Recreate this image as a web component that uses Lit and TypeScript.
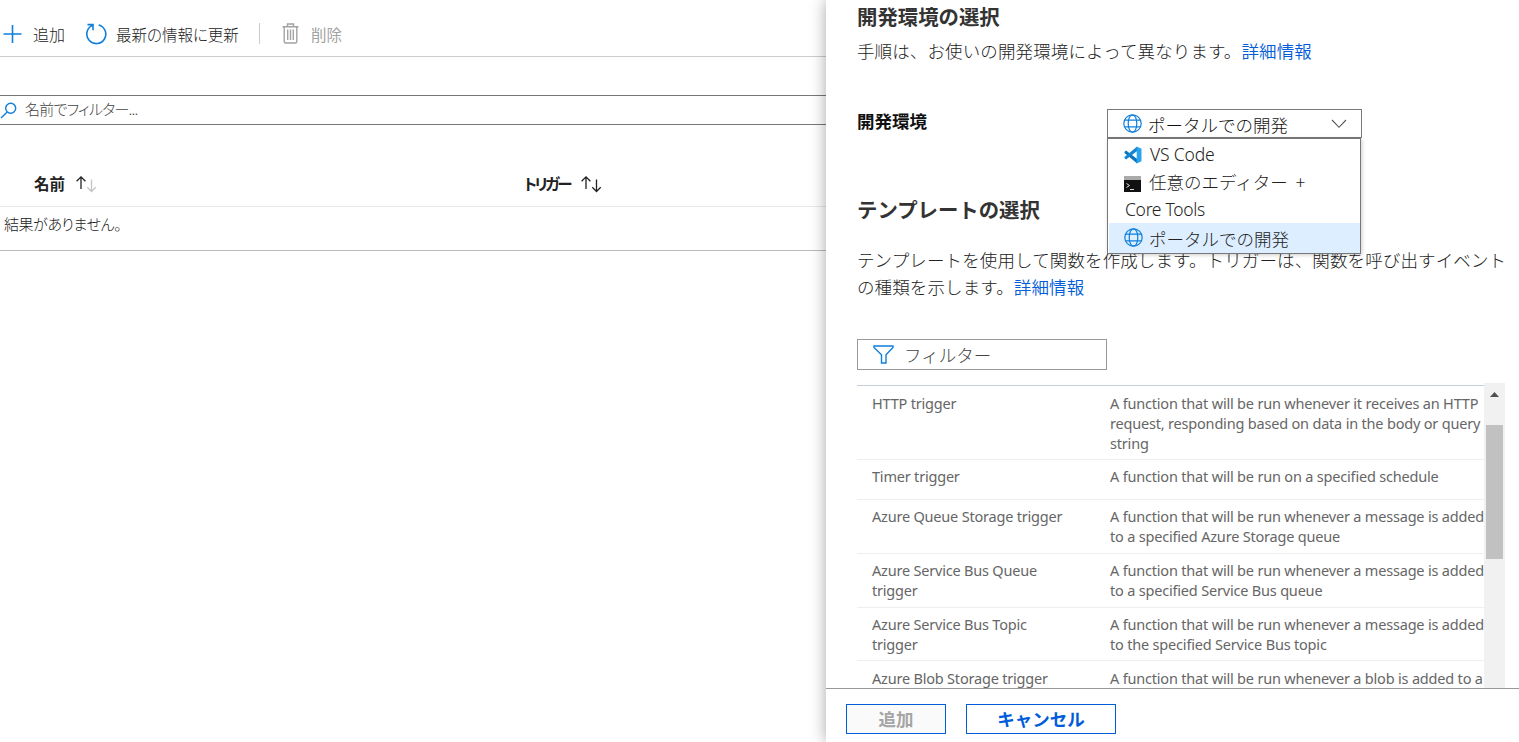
import { LitElement, html, css } from "lit";
import { customElement } from "lit/decorators.js";

const globe = html`<svg class="globe" width="19" height="19" viewBox="0 0 19 19" fill="none" stroke="#0f7fdc" stroke-width="1.2">
  <circle cx="9.5" cy="9.5" r="8.7"/><ellipse cx="9.5" cy="9.5" rx="4.3" ry="8.7"/><path d="M1.7 6.2h15.6M1.7 12.8h15.6"/></svg>`;

const sortIcon = (down: string) => html`<svg class="sort" width="22" height="18" viewBox="0 0 22 18" fill="none" stroke-width="1.3">
  <path stroke="#222" d="M6 14V2M1.6 6.2 6 1.8l4.4 4.4"/><path stroke="${down}" d="M16.5 4.5v12M12.3 12.3l4.2 4.2 4.2-4.2"/></svg>`;

const rows = [
  { h: 74, p: 7, name: ["HTTP trigger"], text: ["A function that will be run whenever it receives an HTTP", "request, responding based on data in the body or query", "string"] },
  { h: 40, p: 6, name: ["Timer trigger"], text: ["A function that will be run on a specified schedule"] },
  { h: 54, p: 6, name: ["Azure Queue Storage trigger"], text: ["A function that will be run whenever a message is added", "to a specified Azure Storage queue"] },
  { h: 54, p: 6, name: ["Azure Service Bus Queue", "trigger"], text: ["A function that will be run whenever a message is added", "to a specified Service Bus queue"] },
  { h: 53, p: 6, name: ["Azure Service Bus Topic", "trigger"], text: ["A function that will be run whenever a message is added", "to the specified Service Bus topic"] },
  { h: 54, p: 7, name: ["Azure Blob Storage trigger"], text: ["A function that will be run whenever a blob is added to a"] },
];

@customElement("app-root")
export class AppRoot extends LitElement {
  static styles = css`
    :host { display: block; height: 742px; overflow: hidden; background: #fff; color: #333; font-family: "Noto Sans", "Noto Sans CJK JP", sans-serif; }
    * { box-sizing: border-box; }
    svg { display: block; flex: none; }
    .page { display: flex; height: 742px; }
    .main { width: 826px; flex: none; font-family: "Noto Sans CJK JP", sans-serif; font-size: 15.5px; white-space: nowrap; font-weight: 300; color: #222; }
    .toolbar { height: 57px; border-bottom: 1px solid #ccc; display: flex; align-items: center; padding: 11px 0 0 3px; }
    .toolbar .t1 { margin: 0 20px 0 11px; width: 32px; font-size: 16px; }
    .toolbar .t2 { margin-left: 9px; width: 124px; font-feature-settings: "palt"; }
    .sep { width: 1px; height: 21px; background: #ccc; margin: 0 22px 0 19px; }
    .t3 { margin-left: 12px; color: #a3a3a3; font-weight: 400; }
    .search { margin-top: 38px; height: 30px; border: solid #777; border-width: 1px 0; display: flex; align-items: center; color: #444; }
    .search span { margin: -3px 0 0 8px; font-feature-settings: "palt"; font-size: 15px; letter-spacing: -.75px; }
    .head { display: flex; height: 82px; border-bottom: 1px solid #e8e8e8; padding-top: 36px; font-weight: 600; color: #222; }
    .col { display: flex; flex: none; align-items: center; height: 44px; line-height: 24px; padding-left: 34px; width: 490px; font-feature-settings: "palt"; }
    .col.second { width: 300px; }
    .second span { letter-spacing: -2.5px; }
    .sort { margin: 2px 0 0 10px; }
    .empty { height: 44px; border-bottom: 1px solid #bbb; padding: 5px 0 0 4px; line-height: 24px; font-feature-settings: "palt"; font-size: 15px; letter-spacing: -.45px; }
    .panel { width: 693px; flex: none; height: 742px; display: flex; flex-direction: column; box-shadow: 0 0 15px rgba(0,0,0,.35); background: #fff; z-index: 1; }
    .body { height: 688px; padding-left: 31px; font-size: 17.5px; font-family: "Noto Sans CJK JP", sans-serif; font-weight: 300; overflow: hidden; color: #222; }
    h2 { margin: -1px 0 0; font-size: 20.4px; line-height: 34px; font-weight: 600; color: #333; }
    p { margin: 0; line-height: 27px; white-space: nowrap; letter-spacing: .12px; }
    a { color: #015cda; font-weight: 350; }
    .intro { margin-top: 4px; }
    .env { display: flex; height: 30px; margin-top: 45px; line-height: 24px; color: #111; }
    .label { width: 250px; font-weight: 600; }
    .selectwrap { position: relative; width: 255px; }
    .select { height: 29px; border: 1px solid #7a7a7a; display: flex; align-items: center; padding: 0 14px 0 15px; }
    .select span { margin: 3px auto 0 6px; }
    .menu { position: absolute; z-index: 2; left: 0; top: 29px; width: 254px; height: 116px; border: 1px solid #777; background: #fff; color: #222; padding-left: 1px; box-shadow: 1px 1px 4px rgba(0,0,0,.2); }
    .opt { display: flex; align-items: center; padding-left: 15px; height: 27px; }
    .opt span { margin: -3px 0 0 7px; word-spacing: 4px; white-space: nowrap; }
    .opt svg { margin-top: 1px; }
    .opt.latin { font-family: "Noto Sans"; font-weight: 350; letter-spacing: -.15px; height: 31px; }
    .opt.latin span { margin: -1px 0 0 8px; word-spacing: 0; }
    .opt.cont { height: 26px; }
    .opt.latin.cont span { margin: -3px 0 0 1px; letter-spacing: -.3px; }
    .opt.sel { background: #dceeff; height: 30px; }
    .opt.sel span { margin: 1px 0 0 6px; }
    .opt.sel svg { margin-top: -2px; }
    .tmpl { margin-top: 53px; }
    .tp { margin-top: 20px; }
    .filter { margin-top: 39px; width: 250px; height: 31px; border: 1px solid #999; display: flex; align-items: center; padding-left: 15px; color: #444; }
    .filter span { margin: -1px 0 0 10px; }
    .list { margin-top: 13px; height: 305px; width: 648px; display: flex; }
    .rows { width: 627px; margin-top: 2px; border-top: 1px solid #c5ced8; font-family: "Noto Sans"; font-size: 14.5px; font-weight: 400; line-height: 20px; color: #666; white-space: nowrap; overflow: hidden; }
    .row { display: flex; border-bottom: 1px solid #eee; padding-left: 15px; }
    .r74 { height: 74px; } .r40 { height: 40px; } .r54 { height: 54px; } .r53 { height: 53px; }
    .p6 { padding-top: 6px; } .p7 { padding-top: 7px; }
    .name { width: 238px; flex: none; letter-spacing: -.2px; }
    .desc { letter-spacing: -.19px; }
    .bar { width: 21px; background: #f1f1f1; padding: 9px 2px 0; }
    .arrow { margin-left: 4px; }
    .thumb { width: 17px; height: 134px; background: #c1c1c1; margin-top: 28px; }
    .foot { height: 54px; border-top: 1px solid #999; display: flex; gap: 20px; padding: 15px 20px 0; }
    button { margin: 0; padding: 0; height: 30px; width: 150px; border: 1px solid #015cda; background: #fff; color: #015cda; font: 700 17.5px/28px "Noto Sans CJK JP", sans-serif; }
    button.off { width: 100px; background: #fafafa; color: #a5a5a5; }
  `;

  render() {
    return html`<div class="page">
      <div class="main">
        <div class="toolbar">
          <svg width="19" height="20" viewBox="0 0 19 20" stroke="#0f7fdc" stroke-width="1.6"><path d="M.5 10h18M9.5 1v18"/></svg>
          <span class="t1">追加</span>
          <svg width="22" height="22" viewBox="0 0 22 22" fill="none" stroke="#0f7fdc" stroke-width="1.6"><path d="M13.7 1.9A9.5 9.5 0 1 1 7 2.6L8 1.6M2.5 1.6H8v5.6"/></svg>
          <span class="t2">最新の情報に更新</span>
          <i class="sep"></i>
          <svg width="17" height="21" viewBox="0 0 17 21" fill="none" stroke="#a3a3a3" stroke-width="1.4"><path d="M.5 3.7h16M5.5 3.5V1h6v2.5M2.2 4v14.5q0 1.5 1.5 1.5h9.6q1.5 0 1.5-1.5V4M5.7 6.5v10.5M8.5 6.5v10.5M11.3 6.5v10.5"/></svg>
          <span class="t3">削除</span>
        </div>
        <div class="search">
          <svg width="17" height="17" viewBox="0 0 17 17" fill="none" stroke="#0f7fdc" stroke-width="1.4"><circle cx="10.7" cy="6.3" r="5"/><path d="M7.2 10 1 16"/></svg>
          <span>名前でフィルター...</span>
        </div>
        <div class="head">
          <div class="col"><span>名前</span>${sortIcon("#c4c4c4")}</div>
          <div class="col second"><span>トリガー</span>${sortIcon("#222")}</div>
        </div>
        <div class="empty">結果がありません。</div>
      </div>
      <div class="panel">
        <div class="body">
          <h2>開発環境の選択</h2>
          <p class="intro">手順は、お使いの開発環境によって異なります。<a>詳細情報</a></p>
          <div class="env">
            <div class="label">開発環境</div>
            <div class="selectwrap">
              <div class="select">${globe}<span>ポータルでの開発</span>
                <svg width="16" height="10" viewBox="0 0 16 10" fill="none" stroke="#555" stroke-width="1.1"><path d="M1 1l7 7.3L15 1"/></svg></div>
              <div class="menu">
                <div class="opt latin"><svg width="18" height="18" viewBox="0 0 18 18"><path fill="#0a74bd" d="M.5 6 2 4.6 13.2 13v4.5L.5 7z"/><path fill="#1585cf" d="M.5 12 2 13.4 13.2 5V.5L.5 11z"/><path fill="#2aa4ef" d="M12.7 .5 17.5 2.8v12.4L12.7 17.5z"/></svg><span>VS Code</span></div>
                <div class="opt"><svg width="18" height="16" viewBox="0 0 18 16"><path fill="#111" d="M0 0h17v16H0z"/><path fill="#aaa" d="M0 0h17v4H0z"/><path fill="none" stroke="#ddd" d="M2.5 7.5l3 2-3 2M6 13.5h4"/></svg><span>任意のエディター +</span></div>
                <div class="opt latin cont"><span>Core Tools</span></div>
                <div class="opt sel">${globe}<span>ポータルでの開発</span></div>
              </div>
            </div>
          </div>
          <h2 class="tmpl">テンプレートの選択</h2>
          <p class="tp">テンプレートを使用して関数を作成します。トリガーは、関数を呼び出すイベント<br>の種類を示します。<a>詳細情報</a></p>
          <div class="filter"><svg width="21" height="19" viewBox="0 0 21 19" fill="none" stroke="#0f7fdc" stroke-width="1.4"><path d="M1 1h19v1.5l-7 7.3V18H8.5V9.8L1 2.5z"/></svg><span>フィルター</span></div>
          <div class="list">
            <div class="rows">${rows.map(r => html`<div class="row r${r.h} p${r.p}">
              <div class="name">${r.name.map(l => html`<div>${l}</div>`)}</div>
              <div class="desc">${r.text.map(l => html`<div>${l}</div>`)}</div></div>`)}</div>
            <div class="bar"><svg class="arrow" width="9" height="5" viewBox="0 0 9 5"><path fill="#505050" d="M4.5 0 9 5H0z"/></svg><div class="thumb"></div></div>
          </div>
        </div>
        <div class="foot"><button class="off">追加</button><button>キャンセル</button></div>
      </div>
    </div>`;
  }
}
